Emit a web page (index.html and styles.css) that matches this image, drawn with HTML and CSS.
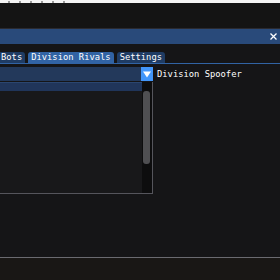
FILE: index.html
```html
<!DOCTYPE html>
<html>
<head>
    <title>Division Spoofer</title>
    <link rel="stylesheet" href="styles.css">
</head>
<body>
    <div class="top-strip">
        <span class="dot"></span><span class="dot"></span><span class="dot"></span>
        <span class="dot"></span><span class="dot"></span><span class="dot"></span>
    </div>

    <div class="desktop">
        <div class="window">
            <div class="title-bar">
                <span class="close-btn">
                    <svg width="7" height="7" viewBox="0 0 7 7">
                        <path d="M0.5 0.5 L6.5 6.5 M6.5 0.5 L0.5 6.5" stroke="#ffffff" stroke-width="1.3"/>
                    </svg>
                </span>
            </div>

            <div class="tab-bar">
                <div class="tab">Bots</div>
                <div class="tab active">Division Rivals</div>
                <div class="tab">Settings</div>
            </div>

            <div class="combo-row">
                <div class="combo">
                    <div class="combo-preview"></div>
                    <div class="combo-btn">
                        <svg width="8" height="7" viewBox="0 0 8 7">
                            <path d="M0 0.5 L8 0.5 L4 6.5 Z" fill="#ffffff"/>
                        </svg>
                    </div>
                </div>
                <span class="combo-label">Division Spoofer</span>
            </div>

            <div class="listbox">
                <div class="list-items">
                    <div class="list-item selected"></div>
                </div>
                <div class="scrollbar">
                    <div class="scroll-thumb"></div>
                </div>
            </div>
        </div>
    </div>
</body>
</html>
```

FILE: styles.css
```css
:root {
    --title: #294a7a;
    --tab: #1f3c64;
    --tab-active: #3163a4;
    --frame: #23395b;
    --button: #4296fa;
    --window-bg: #151517;
    --border: #55555c;
    --text: #ffffff;
}

body {
    margin: 0;
    width: 280px;
    height: 280px;
    overflow: hidden;
    background: #191715;
    font-family: 'DejaVu Sans Mono', 'Liberation Mono', monospace;
    font-size: 8.8px;
    color: var(--text);
}

.top-strip {
    height: 3px;
    background: #f4f4f4;
    display: flex;
    gap: 9px;
    padding-left: 8px;
    align-items: center;
}

.dot {
    width: 2px;
    height: 2px;
    background: #9a9a9a;
}

.desktop {
    padding-top: 25px;
    background: #141414;
}

.window {
    margin-left: -9px;
    width: 290px;
    height: 228px;
    background: var(--window-bg);
    border: 1px solid #2a2a30;
    border-bottom-color: #6a6a70;
}

.title-bar {
    height: 15px;
    background: var(--title);
    display: flex;
    justify-content: flex-end;
    align-items: center;
    padding-right: 5px;
}

.close-btn {
    display: flex;
}

.tab-bar {
    display: flex;
    gap: 3px;
    margin-top: 8px;
    padding-left: 6px;
    border-bottom: 1px solid var(--tab-active);
}

.tab {
    height: 11px;
    line-height: 11px;
    padding: 0 3px;
    background: var(--tab);
    border-radius: 3px 3px 0 0;
}

.tab.active {
    background: var(--tab-active);
}

.combo-row {
    display: flex;
    align-items: center;
    gap: 4px;
    margin-top: 3px;
}

.combo {
    display: flex;
    width: 161px;
    height: 14px;
}

.combo-preview {
    flex: 1;
    background: var(--frame);
}

.combo-btn {
    width: 12px;
    background: var(--button);
    display: flex;
    align-items: center;
    justify-content: center;
}

.combo-label {
    line-height: 14px;
}

.listbox {
    display: flex;
    width: 161px;
    height: 112px;
    margin-top: 1px;
    box-sizing: border-box;
    background: #18181a;
    border-right: 1px solid var(--border);
    border-bottom: 1px solid var(--border);
}

.list-items {
    flex: 1;
}

.list-item {
    height: 8px;
}

.list-item.selected {
    background: #20355a;
    border-top: 1px solid #2b4670;
}

.scrollbar {
    width: 10px;
    background: #0d0d0e;
    padding: 9px 1px 0 1px;
    box-sizing: border-box;
}

.scroll-thumb {
    width: 7px;
    height: 73px;
    background: #4f4f52;
    border-radius: 3px;
}
```
